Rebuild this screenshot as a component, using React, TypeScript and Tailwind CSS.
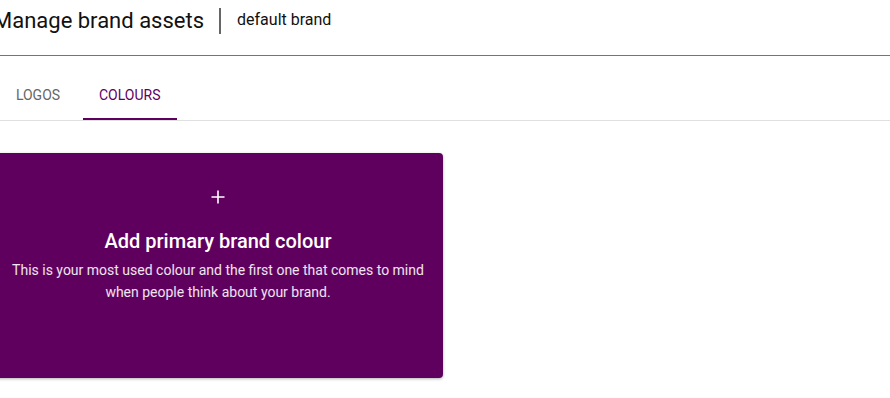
import React from 'react';

const tabs = ['Logos', 'Colours'];

const AddColourCard: React.FC = () => (
    <button className="flex flex-col items-center w-[450px] h-[225px] pt-[36px] px-[12px] rounded-[4px] bg-[#5f005f] text-white text-center shadow-[0_1px_3px_rgba(0,0,0,0.3)]">
        <svg width="16" height="16" viewBox="0 0 16 16" className="shrink-0">
            <path d="M8 1.5v13M1.5 8h13" stroke="white" strokeWidth="1.6" />
        </svg>
        <h3 className="mt-[23px] text-[20px] leading-[26px] font-medium">Add primary brand colour</h3>
        <p className="mt-[5px] text-[14px] leading-[22px] text-white/90">
            This is your most used colour and the first one that comes to mind
            <br />
            when people think about your brand.
        </p>
    </button>
);

export default function App() {
    const active = 'Colours';
    return (
        <div className="min-h-[398px] bg-white overflow-hidden font-['Roboto',sans-serif]">
            {/* Header */}
            <div className="h-[56px] border-b border-[#757575] pt-[7px]">
                <div className="flex items-center h-[28px] -ml-[7px]">
                    <h1 className="text-[22px] leading-[28px] text-[#111]">Manage brand assets</h1>
                    <div className="w-[2px] h-[26px] bg-[#666] ml-[15px] mr-[16px]" />
                    <span className="text-[16px] leading-[22px] text-[#111] -mt-[3px]">default brand</span>
                </div>
            </div>

            {/* Tabs */}
            <div className="mt-[16px] border-b border-[#e0e0e0]">
                <div className="flex -ml-[7px]">
                    {tabs.map((t) => (
                        <div
                            key={t}
                            className={
                                t === active
                                    ? 'min-w-[90px] h-[48px] px-[16px] flex items-center justify-center uppercase text-[14px] text-[#5f005f] border-b-2 border-[#5f005f]'
                                    : 'min-w-[90px] h-[48px] px-[16px] flex items-center justify-center uppercase text-[14px] text-[#666] border-b-2 border-transparent'
                            }
                        >
                            {t}
                        </div>
                    ))}
                </div>
            </div>

            {/* Content */}
            <div className="mt-[32px] -ml-[7px]">
                <AddColourCard />
            </div>
        </div>
    );
}
